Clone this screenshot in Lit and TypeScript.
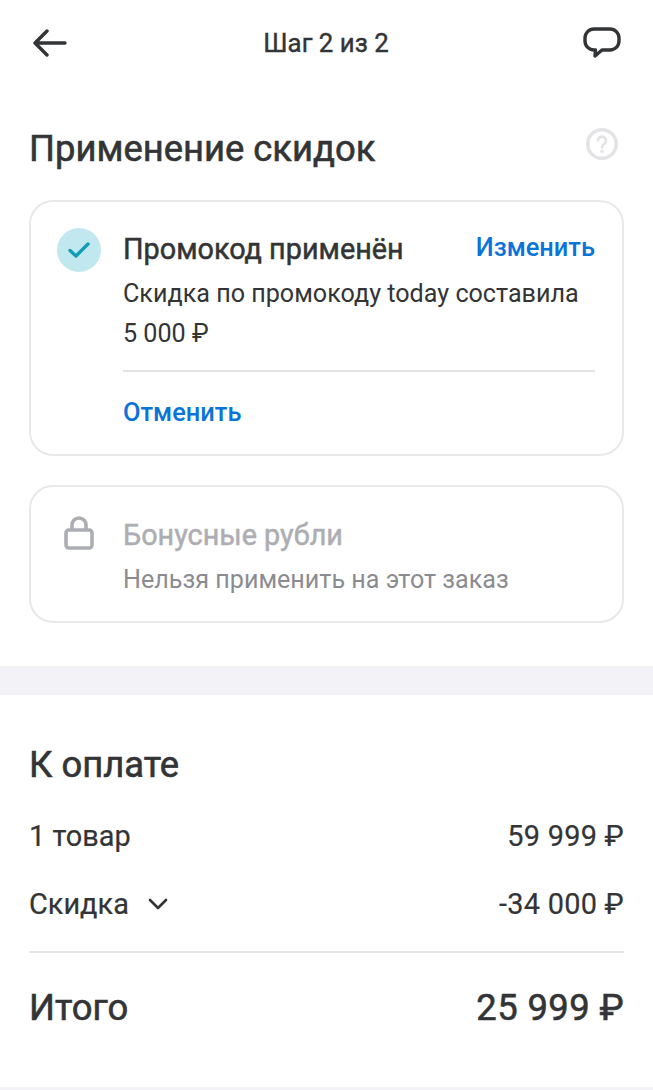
import { LitElement, html, css } from 'lit';
import { customElement } from 'lit/decorators.js';

// Checkout step 2: discounts card list and payment summary.

@customElement('app-root')
export class AppRoot extends LitElement {
  static styles = css`
    :host {
      display: block;
      width: 653px;
      height: 1090px;
      overflow: hidden;
      background: #fff;
      font-family: Roboto, 'Liberation Sans', sans-serif;
      color: #333436;
    }

    .header {
      height: 86px;
      padding: 0 32px 0 33px;
      display: flex;
      align-items: center;
      justify-content: space-between;
    }

    .header-title {
      font-size: 25.8px;
      font-weight: 400;
      -webkit-text-stroke: 0.4px;
      line-height: 30px;
      margin-left: 2px;
    }

    .icon {
      display: block;
      flex: none;
    }

    .section {
      padding: 0 29px;
    }

    .title-row {
      height: 48px;
      margin-top: 39px;
      display: flex;
      align-items: center;
      justify-content: space-between;
    }

    h1,
    h2 {
      margin: 0;
      font-size: 36.4px;
      font-weight: 400;
      -webkit-text-stroke: 0.6px;
      line-height: 48px;
    }

    .help {
      margin: -10px 6px 0 0;
    }

    .card {
      border: 2px solid #e8e8eb;
      border-radius: 24px;
      margin-top: 27px;
      padding: 26px 27px 0 26px;
      display: flex;
      gap: 22px;
      box-sizing: border-box;
    }

    .card.promo {
      height: 256px;
    }

    .card.bonus {
      height: 138px;
      margin-top: 29px;
    }

    .badge {
      width: 44px;
      height: 44px;
      border-radius: 50%;
      background: #c2e8ef;
      display: flex;
      align-items: center;
      justify-content: center;
      flex: none;
    }

    .lock-wrap {
      width: 44px;
      padding-top: 3px;
      display: flex;
      justify-content: center;
      align-items: flex-start;
      flex: none;
    }

    .body {
      flex: 1;
      min-width: 0;
    }

    .muted .body {
      padding-top: 1px;
    }

    .head {
      display: flex;
      justify-content: space-between;
    }

    .name {
      font-size: 28.8px;
      font-weight: 400;
      -webkit-text-stroke: 0.5px;
      line-height: 42px;
    }

    .link {
      font-size: 25.4px;
      font-weight: 500;
      color: #0a74d9;
      line-height: 38px;
    }

    .text {
      font-size: 25.15px;
      line-height: 40px;
    }

    .promo .text {
      margin-top: 4px;
    }

    .muted .text {
      margin-top: 4px;
    }

    .divider {
      height: 2px;
      background: #e3e3e6;
    }

    .card .divider {
      margin-top: 16px;
    }

    .cancel {
      display: block;
      margin-top: 21px;
    }

    .muted .name {
      color: #adaeb3;
    }

    .muted .text {
      color: #8b8c91;
    }

    .band {
      height: 29px;
      margin-top: 43px;
      background: #f2f2f7;
    }

    .summary h2 {
      margin-top: 46px;
    }

    .row {
      display: flex;
      align-items: center;
      justify-content: space-between;
      font-size: 28.9px;
      -webkit-text-stroke: 0.2px;
      line-height: 36px;
      margin-top: 32px;
    }

    .row.first {
      margin-top: 29px;
    }

    .amount {
      letter-spacing: 0.25px;
    }

    .label {
      display: flex;
      align-items: center;
      gap: 19px;
    }

    .summary .divider {
      margin-top: 29px;
    }

    .total {
      display: flex;
      justify-content: space-between;
      font-size: 36.4px;
      font-weight: 400;
      -webkit-text-stroke: 0.6px;
      line-height: 48px;
      margin-top: 31px;
    }

    .total .amount {
      letter-spacing: 0.4px;
    }

    .footer-line {
      position: absolute;
      top: 1087px;
      left: 0;
      width: 653px;
      height: 3px;
      background: #f2f2f7;
    }
  `;

  render() {
    return html`
      <div class="header">
        <svg class="icon" width="34" height="28" viewBox="0 0 34 28" fill="none" stroke="#333436" stroke-width="3.4" stroke-linecap="round" stroke-linejoin="round">
          <path d="M14 2 2 14l12 12M2 14h30" />
        </svg>
        <div class="header-title">Шаг 2 из 2</div>
        <svg class="icon" width="38" height="32" viewBox="0 0 38 32" fill="none" stroke="#333436" stroke-width="3.4" stroke-linejoin="round">
          <path d="M11 2h16a9 9 0 0 1 9 9v3a9 9 0 0 1-9 9h-8l-7 6 .5-6H11a9 9 0 0 1-9-9v-3a9 9 0 0 1 9-9Z" />
        </svg>
      </div>

      <div class="section">
        <div class="title-row">
          <h1>Применение скидок</h1>
          <svg class="icon help" width="32" height="32" viewBox="0 0 32 32" fill="none">
            <circle cx="16" cy="16" r="14.3" stroke="#e3e3e6" stroke-width="3.4" />
            <path d="M12 12.6a4 4 0 1 1 6.3 3.3c-1.5 1-2.3 1.8-2.3 3.4" stroke="#e3e3e6" stroke-width="2.6" stroke-linecap="round" />
            <circle cx="16" cy="23.2" r="1.7" fill="#e3e3e6" />
          </svg>
        </div>

        <div class="card promo">
          <div class="badge">
            <svg class="icon" width="22" height="16" viewBox="0 0 22 16" fill="none" stroke="#139db5" stroke-width="3.4" stroke-linecap="round" stroke-linejoin="round">
              <path d="M2 8.5 8 14 20 2" />
            </svg>
          </div>
          <div class="body">
            <div class="head">
              <span class="name">Промокод применён</span>
              <span class="link">Изменить</span>
            </div>
            <div class="text">Скидка по промокоду today составила<br />5 000 ₽</div>
            <div class="divider"></div>
            <span class="link cancel">Отменить</span>
          </div>
        </div>

        <div class="card bonus muted">
          <div class="lock-wrap">
            <svg class="icon" width="30" height="34" viewBox="0 0 30 34" fill="none" stroke="#adaeb3" stroke-width="3.6" stroke-linejoin="round">
              <rect x="2" y="14" width="26" height="18" rx="3" />
              <path d="M8 14V9a7 7 0 0 1 14 0v5" />
            </svg>
          </div>
          <div class="body">
            <div class="name">Бонусные рубли</div>
            <div class="text">Нельзя применить на этот заказ</div>
          </div>
        </div>
      </div>

      <div class="band"></div>

      <div class="section summary">
        <h2>К оплате</h2>
        <div class="row first">
          <span>1 товар</span>
          <span class="amount">59 999 ₽</span>
        </div>
        <div class="row">
          <span class="label">
            Скидка
            <svg class="icon" width="20" height="12" viewBox="0 0 20 12" fill="none" stroke="#333436" stroke-width="2.6" stroke-linecap="round" stroke-linejoin="round">
              <path d="M2 2l8 8 8-8" />
            </svg>
          </span>
          <span class="amount">-34 000 ₽</span>
        </div>
        <div class="divider"></div>
        <div class="total">
          <span>Итого</span>
          <span class="amount">25 999 ₽</span>
        </div>
      </div>
      <div class="footer-line"></div>
    `;
  }
}
